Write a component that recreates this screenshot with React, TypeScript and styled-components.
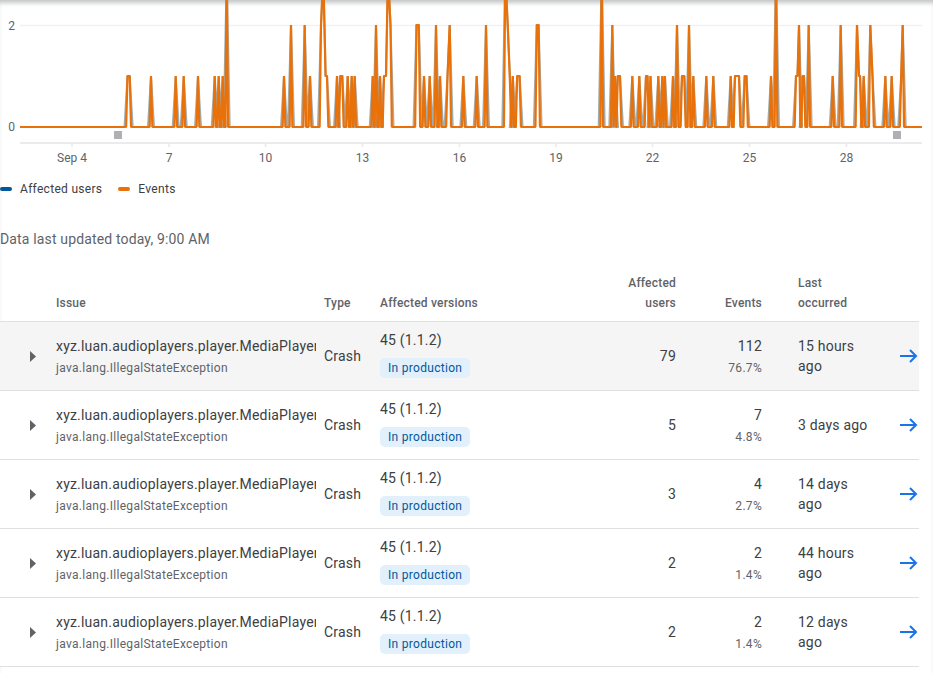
import React from "react";
import styled, { createGlobalStyle } from "styled-components";

const GlobalStyle = createGlobalStyle`
  html, body {
    margin: 0;
    padding: 0;
    background: #fff;
    overflow: hidden;
    font-family: Roboto, "Liberation Sans", sans-serif;
    color: #3c4043;
  }
`;

const Page = styled.div`
  width: 933px;
  height: 673px;
  overflow: hidden;
  box-shadow: inset 0 5px 4px -2px rgba(60, 64, 67, 0.3);
`;

const ChartSvg = styled.svg`
  display: block;
  width: 933px;
  height: 170px;

  text {
    font-family: Roboto, "Liberation Sans", sans-serif;
    font-size: 12px;
    fill: #5f6368;
  }
`;

const Legend = styled.div`
  display: flex;
  gap: 16px;
  height: 36px;
  margin-top: 1px;
  font-size: 12px;
  line-height: 36px;
  letter-spacing: 0.3px;
  color: #3c4043;
`;

const LegendItem = styled.span`
  display: flex;
  align-items: center;
  gap: 8px;
`;

const LegendSwatch = styled.i<{ $color: string }>`
  width: 12px;
  height: 4px;
  border-radius: 2px;
  background: ${({ $color }) => $color};
`;

const Updated = styled.p`
  margin: 22px 0 0;
  font-size: 14px;
  line-height: 20px;
  letter-spacing: 0.15px;
  color: #5f6368;
`;

const Table = styled.table`
  width: 919px;
  margin-top: 24px;
  table-layout: fixed;
  border-collapse: collapse;
`;

const HeadCell = styled.th<{ $right?: boolean }>`
  padding: 0 0 8px;
  vertical-align: bottom;
  font-size: 12px;
  font-weight: 500;
  line-height: 20px;
  letter-spacing: 0.2px;
  color: #5f6368;
  text-align: ${({ $right }) => ($right ? "right" : "left")};
`;

const HeadRow = styled.tr`
  border-bottom: 1px solid #e0e0e0;
`;

const Row = styled.tr<{ $active?: boolean }>`
  height: 69px;
  border-bottom: 1px solid #e0e0e0;
  background: ${({ $active }) => ($active ? "#f5f5f5" : "#fff")};
`;

const Cell = styled.td<{ $right?: boolean }>`
  padding: 0;
  font-size: 14px;
  line-height: 20px;
  letter-spacing: 0.2px;
  color: #3c4043;
  text-align: ${({ $right }) => ($right ? "right" : "left")};
`;

const CaretCell = styled(Cell)`
  padding-left: 30px;
`;

const Stack = styled.div`
  padding-top: 2px;
`;

const IssueName = styled.div`
  width: 260px;
  overflow: hidden;
  white-space: nowrap;
`;

const SubText = styled.div`
  margin-top: 2px;
  font-size: 12px;
  letter-spacing: 0.3px;
  color: #5f6368;
`;

const VersionBlock = styled.div`
  padding-bottom: 4px;
`;

const VersionText = styled.div`
  margin-bottom: 8px;
`;

const Chip = styled.span`
  display: block;
  width: fit-content;
  height: 20px;
  padding: 0 8px;
  border-radius: 5px;
  background: #e1f0fb;
  font-size: 12px;
  line-height: 20px;
  letter-spacing: 0.3px;
  color: #01579b;
`;

const LastOccurred = styled.div`
  width: 76px;
  margin-left: 36px;
`;

const Icon = styled.svg`
  display: block;
`;

type Peak = [number, number];

const peaks: Peak[] = [
  [127.5, 1], [129.7, 1], [151, 1], [175.7, 1], [183.7, 1], [198, 1], [214.7, 1], [218.7, 1], [222.7, 1], [226.7, 3],
  [284, 1], [291, 2], [304.7, 2], [310, 1], [321, 2], [323.3, 3], [325.6, 1], [327, 1], [337, 1], [340.3, 1], [342.3, 1],
  [347.7, 1], [351.7, 1], [354.7, 1], [372.7, 1], [376, 2], [380, 1], [384, 1], [386, 1], [388, 3], [390.5, 2],
  [416.5, 2], [418.8, 2], [424, 1], [429.7, 1], [436, 2], [440, 1], [447.5, 1], [449.7, 2], [463.3, 1], [476.7, 1],
  [486, 2], [505.3, 3], [507.7, 2], [509.8, 1], [512.8, 1], [517.2, 1], [519.6, 1], [536.8, 2], [538.6, 2], [601.7, 3],
  [612.3, 2], [615, 1], [617.8, 1], [620, 1], [632.3, 1], [639.3, 1], [646, 1], [647.5, 1], [650.5, 1], [658.3, 1], [662.3, 1],
  [664.9, 1], [673, 1], [677, 2], [682, 1], [684.3, 1], [689, 2], [693.3, 1], [706.3, 1], [713.3, 1], [730.7, 1],
  [735, 1], [737.5, 1], [739, 1], [744.7, 1], [746.5, 1], [771, 1], [776, 3], [796, 1], [797.5, 1], [799, 2], [802.7, 1], [804, 1], [808.7, 2],
  [832.7, 1], [840.7, 2], [857, 2], [859, 1], [860, 1], [863.7, 1], [870.3, 2], [872.5, 1], [885.3, 1], [891.7, 1], [901.2, 1],
  [902.7, 2],
];

const BASE_Y = 127;
const UNIT = 51;

// turn the peak list into polyline points, dropping to zero between separated peaks
const buildLine = (slope: number) => {
  const points: string[] = [`20,${BASE_Y}`];
  peaks.forEach(([x, value], i) => {
    const prev = peaks[i - 1];
    const next = peaks[i + 1];
    if (!prev || x - prev[0] > 2.6) points.push(`${x - slope},${BASE_Y}`);
    points.push(`${x},${BASE_Y - value * UNIT}`);
    if (!next || next[0] - x > 2.6) points.push(`${x + slope},${BASE_Y}`);
  });
  points.push(`922,${BASE_Y}`);
  return points.join(" ");
};

const ticks = [
  { x: 72, label: "Sep 4" },
  { x: 169, label: "7" },
  { x: 265.5, label: "10" },
  { x: 362.5, label: "13" },
  { x: 459.5, label: "16" },
  { x: 556, label: "19" },
  { x: 652.5, label: "22" },
  { x: 749.5, label: "25" },
  { x: 846.5, label: "28" },
];

const Chart: React.FC = () => (
  <ChartSvg viewBox="0 0 933 170">
    <line x1="20" x2="922" y1="25.5" y2="25.5" stroke="#f1f1f4" strokeWidth="1.5" />
    <text x="15" y="30" textAnchor="end">2</text>
    <text x="15" y="131" textAnchor="end">0</text>
    <line x1="20" x2="922" y1="143" y2="143" stroke="#e4e4ea" strokeWidth="1.5" />
    {ticks.map((tick) => (
      <React.Fragment key={tick.label}>
        <line x1={tick.x} x2={tick.x} y1="143" y2="147" stroke="#e8e8ec" strokeWidth="1.5" />
        <text x={tick.x} y="162" textAnchor="middle">{tick.label}</text>
      </React.Fragment>
    ))}
    <rect x="114" y="131" width="8" height="8" fill="#aeb0b3" />
    <rect x="893" y="131" width="8" height="8" fill="#aeb0b3" />
    <polyline points={buildLine(3)} fill="none" stroke="#4a5a5a" strokeOpacity="0.5" strokeWidth="2" />
    <polyline points={buildLine(1.35)} fill="none" stroke="#e8710a" strokeWidth="2.2" strokeLinejoin="bevel" />
  </ChartSvg>
);

const Caret: React.FC = () => (
  <Icon width="6" height="11" viewBox="0 0 6 11">
    <path d="M0 0l6 5.5L0 11z" fill="#5f6368" />
  </Icon>
);

const Arrow: React.FC = () => (
  <Icon width="18" height="14" viewBox="0 0 18 14" fill="none" stroke="#1a73e8" strokeWidth="2">
    <path d="M0 7h16M10 1l6 6-6 6" />
  </Icon>
);

interface Issue {
  users: string;
  events: string;
  share: string;
  last: string;
}

const issues: Issue[] = [
  { users: "79", events: "112", share: "76.7%", last: "15 hours ago" },
  { users: "5", events: "7", share: "4.8%", last: "3 days ago" },
  { users: "3", events: "4", share: "2.7%", last: "14 days ago" },
  { users: "2", events: "2", share: "1.4%", last: "44 hours ago" },
  { users: "2", events: "2", share: "1.4%", last: "12 days ago" },
];

const App: React.FC = () => (
  <Page>
    <GlobalStyle />
    <Chart />
    <Legend>
      <LegendItem>
        <LegendSwatch $color="#01579b" />
        Affected users
      </LegendItem>
      <LegendItem>
        <LegendSwatch $color="#e8710a" />
        Events
      </LegendItem>
    </Legend>
    <Updated>Data last updated today, 9:00 AM</Updated>
    <Table>
      <colgroup>
        <col width="56" />
        <col width="268" />
        <col width="56" />
        <col width="220" />
        <col width="76" />
        <col width="86" />
        <col width="138" />
        <col width="19" />
      </colgroup>
      <thead>
        <HeadRow>
          <HeadCell />
          <HeadCell>Issue</HeadCell>
          <HeadCell>Type</HeadCell>
          <HeadCell>Affected versions</HeadCell>
          <HeadCell $right>Affected<br />users</HeadCell>
          <HeadCell $right>Events</HeadCell>
          <HeadCell><LastOccurred>Last<br />occurred</LastOccurred></HeadCell>
          <HeadCell />
        </HeadRow>
      </thead>
      <tbody>
        {issues.map((issue, i) => (
          <Row key={i} $active={i === 0}>
            <CaretCell><Caret /></CaretCell>
            <Cell>
              <Stack>
                <IssueName>xyz.luan.audioplayers.player.MediaPlayer</IssueName>
                <SubText>java.lang.IllegalStateException</SubText>
              </Stack>
            </Cell>
            <Cell>Crash</Cell>
            <Cell>
              <VersionBlock>
                <VersionText>45 (1.1.2)</VersionText>
                <Chip>In production</Chip>
              </VersionBlock>
            </Cell>
            <Cell $right>{issue.users}</Cell>
            <Cell $right>
              <Stack>
                {issue.events}
                <SubText>{issue.share}</SubText>
              </Stack>
            </Cell>
            <Cell><LastOccurred>{issue.last}</LastOccurred></Cell>
            <Cell><Arrow /></Cell>
          </Row>
        ))}
      </tbody>
    </Table>
  </Page>
);

export default App;
